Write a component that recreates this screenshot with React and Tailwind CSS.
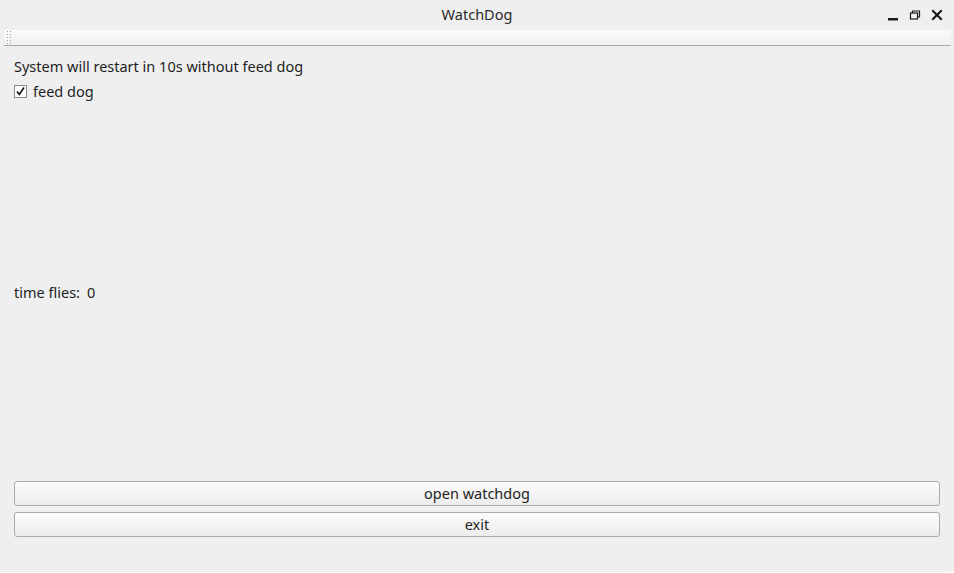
import { useState } from 'react';

export default function App() {
  const [fed, setFed] = useState(true);

  return (
    <div className="w-[954px] h-[573px] bg-white overflow-hidden" style={{ fontFamily: '"Noto Sans", "DejaVu Sans", sans-serif' }}>
      <div className="w-[954px] h-[572px] bg-[#efefef] rounded-br-[4px] flex flex-col text-[#1e1e1e]">
        {/* Title bar */}
        <div className="relative h-[30px] flex items-center justify-center text-[14.5px] text-[#2a2a2a]">
          WatchDog
          <div className="absolute right-[11px] top-[9px] flex items-center gap-[10px]">
            <svg width="12" height="12" viewBox="0 0 12 12">
              <rect x="1" y="9" width="10" height="2.5" fill="#1a1a1a" />
            </svg>
            <svg width="12" height="12" viewBox="0 0 12 12" fill="none" stroke="#1a1a1a" strokeWidth="1.2">
              <rect x="1.5" y="4" width="7" height="6" />
              <path d="M3.5 4V2h7v6H8.5" />
            </svg>
            <svg width="12" height="12" viewBox="0 0 12 12" stroke="#1a1a1a" strokeWidth="2.2" strokeLinecap="square">
              <path d="M2 2l8 8M10 2l-8 8" />
            </svg>
          </div>
        </div>

        {/* Toolbar strip */}
        <div className="ml-[4px] mr-[3px] h-[16px] bg-gradient-to-b from-[#fafafa] to-[#f0f0f0] border-b border-[#a8a8a8] flex items-center pl-[3px]">
          <div className="grid grid-cols-2 gap-x-[2px] gap-y-[2px]">
            {Array.from({ length: 10 }).map((_, i) => (
              <div key={i} className="w-[1px] h-[1px] bg-[#a0a0a0]" />
            ))}
          </div>
        </div>

        {/* Content */}
        <div className="flex-1 flex flex-col px-[14px] pt-[11px] pb-[35px] text-[14.5px]">
          <div className="h-[18px] leading-[18px]">System will restart in 10s without feed dog</div>
          <label className="mt-[7px] h-[18px] flex items-center gap-[6px] leading-[18px] cursor-pointer" onClick={() => setFed(!fed)}>
            <span className="w-[13px] h-[13px] border border-[#8a8a8a] bg-white flex items-center justify-center">
              {fed && (
                <svg width="9" height="9" viewBox="0 0 9 9" fill="none" stroke="#111" strokeWidth="1.6">
                  <path d="M1 4.5l2.3 3L8 0.5" />
                </svg>
              )}
            </span>
            feed dog
          </label>

          <div className="flex-1 flex items-center">
            <div className="flex gap-[7px] mt-[4px]">
              <span>time flies:</span>
              <span>0</span>
            </div>
          </div>

          <div className="flex flex-col gap-[6px]">
            <button className="h-[25px] w-full rounded-[3px] border border-[#ababab] bg-gradient-to-b from-[#fcfcfc] to-[#ececec] text-[14.5px] text-[#1e1e1e]">
              open watchdog
            </button>
            <button className="h-[25px] w-full rounded-[3px] border border-[#ababab] bg-gradient-to-b from-[#fcfcfc] to-[#ececec] text-[14.5px] text-[#1e1e1e]">
              exit
            </button>
          </div>
        </div>
      </div>
    </div>
  );
}
